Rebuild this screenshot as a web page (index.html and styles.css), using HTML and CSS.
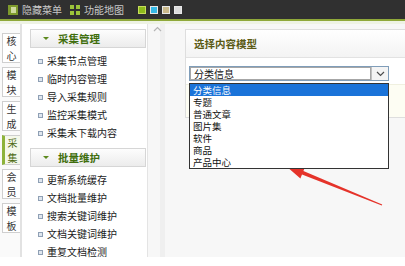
FILE: index.html
```html
<!DOCTYPE html>
<html lang="zh-CN">
<head>
    <meta charset="UTF-8">
    <title>采集管理</title>
    <link rel="stylesheet" href="styles.css">
</head>
<body>
    <div class="topbar">
        <span class="tool"><span class="ico ico-book"></span>隐藏菜单</span>
        <span class="tool"><span class="ico ico-grid"></span>功能地图</span>
        <span class="skins">
            <span class="skin skin-green"></span>
            <span class="skin skin-blue"></span>
            <span class="skin skin-tan"></span>
            <span class="skin skin-gray"></span>
        </span>
    </div>
    <div class="substrip"></div>

    <div class="layout">
        <div class="tabs">
            <div class="tab">核<br>心</div>
            <div class="tab">模<br>块</div>
            <div class="tab">生<br>成</div>
            <div class="tab active">采<br>集</div>
            <div class="tab">会<br>员</div>
            <div class="tab">模<br>板</div>
        </div>

        <div class="menu">
            <div class="group-title"><span class="tri"></span>采集管理</div>
            <ul class="items">
                <li>采集节点管理</li>
                <li>临时内容管理</li>
                <li>导入采集规则</li>
                <li>监控采集模式</li>
                <li>采集未下载内容</li>
            </ul>
            <div class="group-title"><span class="tri"></span>批量维护</div>
            <ul class="items">
                <li>更新系统缓存</li>
                <li>文档批量维护</li>
                <li>搜索关键词维护</li>
                <li>文档关键词维护</li>
                <li>重复文档检测</li>
            </ul>
        </div>

        <div class="gutter">
            <svg class="collapse" width="9" height="6" viewBox="0 0 9 6"><path d="M1 5 L4.5 1.5 L8 5" fill="none" stroke="#b5b5b5" stroke-width="1.2"/></svg>
        </div>

        <div class="main">
            <div class="panel">
                <div class="panel-title">选择内容模型</div>
                <div class="panel-body">
                    <div class="select">
                        <span class="select-value">分类信息</span>
                        <span class="select-btn">
                            <svg width="9" height="6" viewBox="0 0 9 6"><path d="M1 1 L4.5 4.5 L8 1" fill="none" stroke="#4d4d4d" stroke-width="1.2"/></svg>
                        </span>
                        <ul class="options">
                            <li class="selected">分类信息</li>
                            <li>专题</li>
                            <li>普通文章</li>
                            <li>图片集</li>
                            <li>软件</li>
                            <li>商品</li>
                            <li>产品中心</li>
                        </ul>
                    </div>
                </div>
                <div class="panel-foot"></div>
            </div>
        </div>
    </div>

    <svg class="arrow" width="405" height="266" viewBox="0 0 405 266">
        <polygon points="286,166 305,167.2 303.4,171 382.2,204.5 381.8,205.5 302,174.6 300.4,178.4" fill="#e5332a"/>
    </svg>
</body>
</html>
```

FILE: styles.css
```css
body {
    font-family: "Noto Sans CJK SC", "Noto Sans", sans-serif;
    font-size: 10px;
    margin: 0;
    padding: 0;
    background: #fff;
    width: 405px;
    height: 266px;
    overflow: hidden;
    position: relative;
}
ul {
    list-style: none;
    margin: 0;
    padding: 0;
}

/* top bar */
.topbar {
    height: 19px;
    background: #303030;
    border-bottom: 2px solid #8fa83a;
    display: flex;
    align-items: center;
    padding-left: 8px;
    color: #c8c8c8;
    line-height: 19px;
}
.tool {
    display: flex;
    align-items: center;
    margin-right: 8px;
}
.ico {
    width: 10px;
    height: 10px;
    margin-right: 4px;
    box-sizing: border-box;
}
.ico-book {
    background: #cfd9a0;
    border: 2px solid #7e9a2c;
    border-left-width: 3px;
}
.ico-grid {
    background:
        linear-gradient(#303030, #303030) 4px 0 / 2px 10px no-repeat,
        linear-gradient(#303030, #303030) 0 4px / 10px 2px no-repeat,
        #9cc43a;
}
.skins {
    display: flex;
    gap: 4px;
    margin-left: 6px;
}
.skin {
    width: 8px;
    height: 8px;
    box-sizing: border-box;
    border: 1px solid #e8e8e8;
}
.skin-green { background: #8dbb1c; border-color: #c7dd5a; }
.skin-blue { background: #36b9e6; }
.skin-tan { background: #c9b98b; }
.skin-gray { background: #dcdcdc; }
.substrip {
    height: 3px;
    background: #eef3e4;
}

/* layout */
.layout {
    display: flex;
    height: 233px;
}
.tabs {
    width: 20px;
    border-right: 2px solid #e2e2e2;
    padding-top: 9px;
    display: flex;
    flex-direction: column;
    gap: 4px;
    background: #fafafa;
}
.tab {
    margin-left: 2px;
    width: 18px;
    height: 30px;
    box-sizing: border-box;
    border: 1px solid #cfcfcf;
    border-right: none;
    background: #fff;
    color: #333;
    text-align: center;
    font-size: 10px;
    line-height: 14.5px;
    padding-top: 0;
}
.tab.active {
    border-left: 3px solid #8db33a;
    color: #4d6b12;
    background: #f4f8ea;
}

.menu {
    width: 125px;
    border-right: 1px solid #e4e4e4;
    background: #fff;
    padding-top: 5px;
}
.group-title {
    margin-left: 8px;
    width: 116px;
    height: 19px;
    box-sizing: border-box;
    border: 1px solid #d6d6d6;
    background: linear-gradient(#fdfdfd, #ececec);
    color: #3f6e0c;
    font-weight: bold;
    font-size: 10.5px;
    line-height: 17px;
    display: flex;
    align-items: center;
    padding-left: 12px;
}
.tri {
    width: 0;
    height: 0;
    border-left: 3px solid transparent;
    border-right: 3px solid transparent;
    border-top: 3px solid #5d8a1e;
    margin-right: 9px;
}
.items {
    padding: 4px 0 6px 16px;
}
.items li {
    height: 18px;
    line-height: 18px;
    color: #1a1a1a;
    display: flex;
    align-items: center;
    white-space: nowrap;
}
.items li::before {
    content: "";
    width: 5px;
    height: 5px;
    box-sizing: border-box;
    border: 1px solid #8fa0b5;
    background: #dfe6ee;
    margin-right: 4px;
}

.gutter {
    width: 37px;
    background: #f7f7f7;
    position: relative;
    border-left: 12px solid #f7f7f7;
    box-sizing: border-box;
    box-shadow: inset 5px 0 0 #efefef;
}
.collapse {
    position: absolute;
    left: -7px;
    top: 2px;
}

.main {
    flex: 1;
    background: #f7f7f7;
    padding-top: 5px;
}
.panel {
    border: 1px solid #dedede;
    border-right: none;
    background: #fff;
}
.panel-title {
    height: 27px;
    line-height: 27px;
    border-bottom: 1px solid #e2e2e2;
    background: linear-gradient(#ffffff, #f3f3f3);
    padding-left: 8px;
    color: #5b5a14;
    font-weight: bold;
    font-size: 10.5px;
}
.panel-body {
    padding: 8px 0 3px 3px;
    height: 15px;
}
.select {
    position: relative;
    width: 200px;
    height: 15px;
    display: flex;
    border: 1px solid #7f9db9;
    box-sizing: border-box;
    background: #fff;
}
.select-value {
    flex: 1;
    border: 1px solid #a6a6a6;
    line-height: 11px;
    padding-left: 3px;
    color: #111;
    font-size: 10px;
}
.select-btn {
    width: 16px;
    display: flex;
    align-items: center;
    justify-content: center;
    border-left: 1px solid #c0c0c0;
    background: #f4f4f4;
}
.options {
    position: absolute;
    left: -1px;
    top: 16px;
    width: 200px;
    border: 1px solid #333;
    box-sizing: border-box;
    background: #fff;
    z-index: 2;
}
.options li {
    height: 12px;
    line-height: 12px;
    padding-left: 3px;
    color: #111;
    font-size: 9.5px;
}
.options li.selected {
    background: #1a73d9;
    color: #fff;
}
.panel-foot {
    height: 32px;
    background: #fdfdf3;
    border-top: 1px solid #f0f0e0;
}

.arrow {
    position: absolute;
    left: 0;
    top: 0;
    pointer-events: none;
}
```
